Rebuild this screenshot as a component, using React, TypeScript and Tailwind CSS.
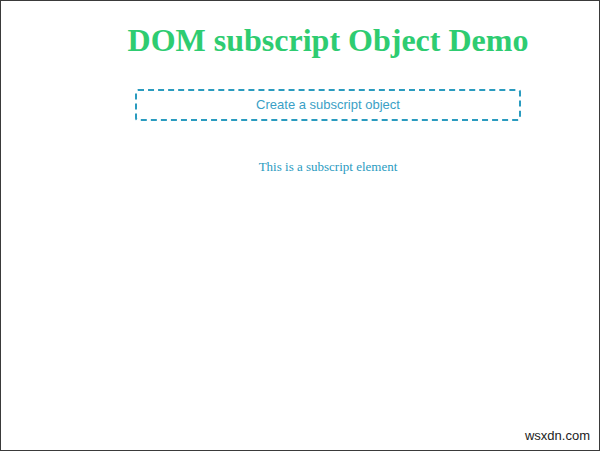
export default function App() {
  return (
    <div className="relative w-[600px] h-[451px] bg-white border border-[#3a3a3a] overflow-hidden">
      <div className="flex flex-col items-center pl-[56px]">
        <h1 className="mt-[19px] text-[32px] leading-[40px] font-bold text-[#2ecc71] font-['Liberation_Serif','Times_New_Roman',serif]">
          DOM subscript Object Demo
        </h1>
        <button className="mt-[29px] w-[386px] h-[32px] border-2 border-dashed border-[#2a9bbf] rounded-[3px] text-[13px] text-[#3a9fc6] bg-white font-['Liberation_Sans',Arial,sans-serif]">
          Create a subscript object
        </button>
        <p className="mt-[38px] text-[13px] leading-[16px] text-[#2a9bbf] font-['Liberation_Serif','Times_New_Roman',serif]">
          This is a subscript element
        </p>
      </div>
      <span className="absolute right-[9px] bottom-[5px] text-[13px] text-[#222] font-['Liberation_Sans',Arial,sans-serif]">
        wsxdn.com
      </span>
    </div>
  );
}
